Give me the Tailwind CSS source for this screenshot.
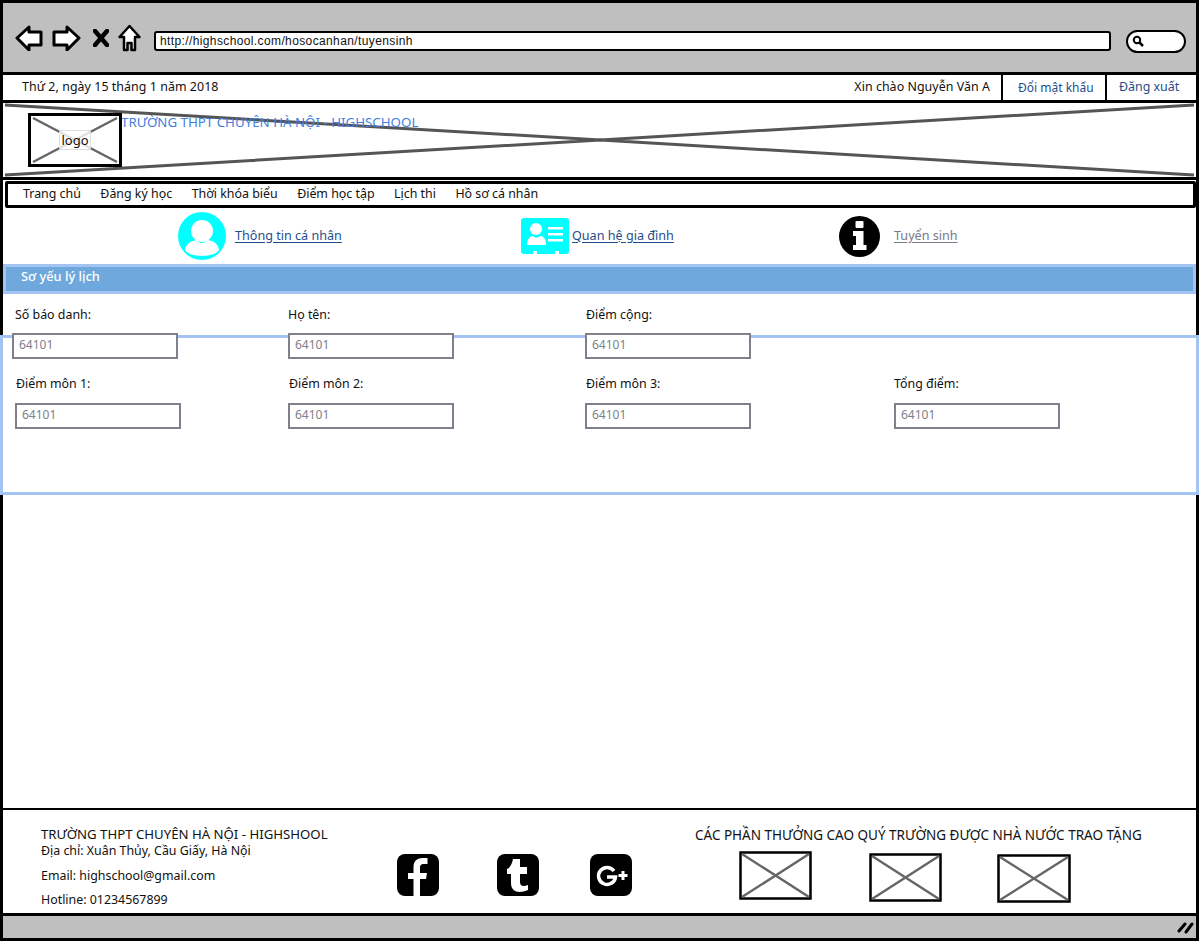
<!DOCTYPE html>
<html lang="vi">
<head>
  <meta charset="UTF-8" />
  <title>Tuyển sinh - Highschool</title>
  <script src="https://cdn.jsdelivr.net/npm/@tailwindcss/browser@4"></script>
</head>
<body class="bg-white font-['Noto_Sans',sans-serif] text-[12.4px] text-[#111]">
<div class="relative w-[1199px] h-[941px] border-[3px] border-black flex flex-col">

  <!-- browser toolbar -->
  <div class="h-[69px] shrink-0 bg-[#bfbfbf] flex items-center pl-[12px] pr-[10px]">
    <svg class="w-[28px] h-[26px] mr-[9px]" viewBox="0 0 28 26"><path d="M2 13 L14 2 L14 7 L26 7 L26 20 L14 20 L14 25 Z" fill="#fff" stroke="#000" stroke-width="3" stroke-linejoin="round"/></svg>
    <svg class="w-[29px] h-[26px] mr-[12px]" viewBox="0 0 29 26"><path d="M27 13 L15 2 L15 7 L2 7 L2 20 L15 20 L15 25 Z" fill="#fff" stroke="#000" stroke-width="3" stroke-linejoin="round"/></svg>
    <svg class="w-[16px] h-[18px] mr-[9px]" viewBox="0 0 16 18"><path d="M2 2 L14 16 M14 2 L2 16" stroke="#000" stroke-width="4.5" stroke-linecap="round"/></svg>
    <svg class="w-[23px] h-[28px] mr-[13px]" viewBox="0 0 23 28"><path d="M11.5 2 L21.5 13 L17 13 L17 26 L13.5 26 L13.5 19 L9.5 19 L9.5 26 L6 26 L6 13 L1.5 13 Z" fill="#fff" stroke="#000" stroke-width="2.5" stroke-linejoin="round"/></svg>
    <div class="w-[957px] h-[20px] mt-[7px] bg-white border-2 border-black rounded-[3px] flex items-center pl-[4px] font-['Liberation_Sans',sans-serif] text-[12px] tracking-[0.38px] mr-[15px]">http://highschool.com/hosocanhan/tuyensinh</div>
    <div class="w-[60px] h-[23px] mt-[7px] bg-white border-2 border-black rounded-full flex items-center pl-[4px]">
      <svg class="w-[12px] h-[12px]" viewBox="0 0 12 12"><circle cx="5" cy="5" r="3.2" fill="none" stroke="#000" stroke-width="2"/><path d="M7.5 7.5 L11 11" stroke="#000" stroke-width="2.5"/></svg>
    </div>
  </div>

  <!-- date / account bar -->
  <div class="h-[31px] shrink-0 border-y-[3px] border-black flex items-stretch">
    <div class="flex-1 flex items-center pl-[19px] tracking-[0.06px]">Thứ 2, ngày 15 tháng 1 năm 2018</div>
    <div class="flex items-center pr-[11px] tracking-[0.06px]">Xin chào Nguyễn Văn A</div>
    <a class="w-[104px] border-l-2 border-black flex items-center pl-[15px] text-[12px] text-[#1f4e8c]">Đổi mật khẩu</a>
    <a class="w-[91px] border-l-2 border-black flex items-center pl-[12px] text-[12.4px] text-[#1f4e8c]">Đăng xuất</a>
  </div>

  <!-- banner -->
  <div class="relative h-[77px] shrink-0 border-b-[3px] border-black">
    <svg class="absolute inset-0 w-full h-full" viewBox="0 0 1195 74" preserveAspectRatio="none"><path d="M2 2 L1193 72 M2 72 L1193 2" stroke="#555" stroke-width="3" fill="none"/></svg>
    <div class="relative flex items-start pl-[25px] pt-[10px]">
      <div class="relative w-[94px] h-[54px] bg-white border-[3px] border-black flex items-center justify-center">
        <svg class="absolute inset-0 w-full h-full" viewBox="0 0 88 48" preserveAspectRatio="none"><path d="M2 2 L86 46 M86 2 L2 46" stroke="#666" stroke-width="2.5" fill="none"/></svg>
        <span class="relative px-px py-[1px] bg-white/80 border border-[#ddd] rounded-[2px] text-[13px] leading-[16px]">logo</span>
      </div>
      <div class="text-[13.3px] text-[#3f7fe0] leading-[16px] -ml-px mt-px">TRƯỜNG THPT CHUYÊN HÀ NỘI - HIGHSCHOOL</div>
    </div>
  </div>

  <!-- main nav -->
  <nav class="h-[27px] shrink-0 mt-px ml-[2px] border-[3px] border-black rounded-[2px] flex items-center gap-[19.5px] pl-[15px]">
    <a>Trang chủ</a>
    <a>Đăng ký học</a>
    <a>Thời khóa biểu</a>
    <a>Điểm học tập</a>
    <a>Lịch thi</a>
    <a>Hồ sơ cá nhân</a>
  </nav>

  <!-- profile tabs -->
  <div class="h-[56px] shrink-0 grid grid-cols-[518px_318px_1fr] items-center text-[12.6px]">
    <div class="flex items-center pl-[175px] gap-[9px]">
      <svg class="w-[48px] h-[48px]" viewBox="0 0 48 48"><circle cx="24" cy="24" r="24" fill="#00ffff"/><circle cx="24" cy="19" r="11" fill="#fff"/><path d="M7 38 C8 31 14 29 18 28 C22 32 26 32 30 28 C35 29 40 31 41 38 C36 46 12 46 7 38 Z" fill="#fff"/></svg>
      <a class="text-[#1f4e8c] underline underline-offset-2">Thông tin cá nhân</a>
    </div>
    <div class="flex items-center gap-[3px]">
      <svg class="w-[48px] h-[37px]" viewBox="0 0 48 37"><path d="M3 0 H45 Q48 0 48 3 V33 Q48 36 45 36 H38 V33 H34 V36 H16 V33 H12 V36 H3 Q0 36 0 33 V3 Q0 0 3 0 Z" fill="#00ffff"/><circle cx="15" cy="11" r="6" fill="#fff"/><path d="M6 27 C6 20 10 18 12 18 C14 20 17 20 19 18 C22 18 25 20 25 27 Z" fill="#fff"/><path d="M27 9 H42 V11.5 H27 Z M27 15 H42 V17.5 H27 Z M27 21 H42 V23.5 H27 Z" fill="#fff"/></svg>
      <a class="text-[#1f4e8c] underline underline-offset-2">Quan hệ gia đình</a>
    </div>
    <div class="flex items-center gap-[14px]">
      <svg class="w-[41px] h-[41px]" viewBox="0 0 41 41"><circle cx="20.5" cy="20.5" r="20.5" fill="#000"/><rect x="16.5" y="5" width="8" height="7" rx="1" fill="#fff"/><path d="M14 15 H24.5 V29 H27.5 V34 H14 V29 H17 V20 H14 Z" fill="#fff"/></svg>
      <a class="text-[#7a7a88] underline underline-offset-2">Tuyển sinh</a>
    </div>
  </div>

  <!-- section heading -->
  <div class="h-[30px] shrink-0 bg-[#6fa8dc] border-[3px] border-[#a3c4f3] pl-[15px] text-[12.8px] text-white font-medium leading-[18px]">Sơ yếu lý lịch</div>

  <!-- form -->
  <div class="relative h-[200px] shrink-0 pl-[9px]">
    <div class="absolute left-[-3px] right-[-3px] top-[41px] h-[160px] border-[3px] border-[#a3c4f3]"></div>
    <div class="relative grid grid-cols-[276px_298px_308px_1fr] pt-[12px]">
      <label class="pl-[3px] h-[27px]">Số báo danh:</label>
      <label class="h-[27px]">Họ tên:</label>
      <label class="h-[27px]">Điểm cộng:</label>
      <div></div>
      <input value="64101" class="w-[166px] h-[26px] border-2 border-[#80808c] bg-white px-[5px] pb-[3px] text-[12px] text-[#80808c] outline-none" />
      <input value="64101" class="w-[166px] h-[26px] border-2 border-[#80808c] bg-white px-[5px] pb-[3px] text-[12px] text-[#80808c] outline-none" />
      <input value="64101" class="w-[166px] h-[26px] border-2 border-[#80808c] bg-white px-[5px] pb-[3px] text-[12px] text-[#80808c] outline-none -ml-px" />
      <div></div>
      <label class="pl-[4px] h-[28px] mt-[16px]">Điểm môn 1:</label>
      <label class="h-[28px] mt-[16px] pl-[1px]">Điểm môn 2:</label>
      <label class="h-[28px] mt-[16px]">Điểm môn 3:</label>
      <label class="h-[28px] mt-[16px]">Tổng điểm:</label>
      <input value="64101" class="w-[166px] h-[26px] border-2 border-[#80808c] bg-white px-[5px] pb-[3px] text-[12px] text-[#80808c] outline-none ml-[3px]" />
      <input value="64101" class="w-[166px] h-[26px] border-2 border-[#80808c] bg-white px-[5px] pb-[3px] text-[12px] text-[#80808c] outline-none" />
      <input value="64101" class="w-[166px] h-[26px] border-2 border-[#80808c] bg-white px-[5px] pb-[3px] text-[12px] text-[#80808c] outline-none -ml-px" />
      <input value="64101" class="w-[166px] h-[26px] border-2 border-[#80808c] bg-white px-[5px] pb-[3px] text-[12px] text-[#80808c] outline-none" />
    </div>
  </div>

  <div class="flex-1"></div>

  <!-- footer -->
  <footer class="h-[105px] shrink-0 border-t-2 border-black flex">
    <div class="w-[394px] pl-[38px] pt-[16px] leading-[16px]">
      <p class="text-[13.2px]">TRƯỜNG THPT CHUYÊN HÀ NỘI - HIGHSHOOL</p>
      <p class="mt-px">Địa chỉ: Xuân Thủy, Cầu Giấy, Hà Nội</p>
      <p class="mt-[9px]">Email: highschool@gmail.com</p>
      <p class="mt-[8px]">Hotline: 01234567899</p>
    </div>
    <div class="w-[298px] flex items-start pt-[44px]">
      <svg class="w-[42px] h-[42px] mr-[58px]" viewBox="0 0 42 42"><rect width="42" height="42" rx="8" fill="#000"/><path d="M23 42 V25 H29 L30 19 H23 V14 C23 11 24 10 27 10 H30.500 V4 H25.500 C19.500 4 16.500 7.500 16.500 13 V19 H11 V25 H16.500 V42 Z" fill="#fff"/></svg>
      <svg class="w-[42px] h-[42px] mr-[51px]" viewBox="0 0 42 42"><rect width="42" height="42" rx="8" fill="#000"/><path d="M16 5 H23 V13 H30 V20 H23 V28 C23 32 26 33 31 31 V36 C22 40 14 38 14 29 V20 H10 V15 C13 14 15 10 16 5 Z" fill="#fff"/></svg>
      <svg class="w-[42px] h-[42px]" viewBox="0 0 42 42"><rect width="42" height="42" rx="8" fill="#000"/><path d="M24 17 A8.500 8.500 0 1 0 25.500 23 H17" fill="none" stroke="#fff" stroke-width="3.500"/><path d="M33 17 V26 M28.500 21.500 H37.500" stroke="#fff" stroke-width="3"/></svg>
    </div>
    <div class="flex-1 pt-[17px]">
      <p class="leading-[16px] text-[13.5px]">CÁC PHẦN THƯỞNG CAO QUÝ TRƯỜNG ĐƯỢC NHÀ NƯỚC TRAO TẶNG</p>
      <div class="flex items-start pl-[44px] mt-[8px]">
        <svg class="w-[73px] h-[49px] mr-[57px]" viewBox="0 0 73 49"><rect x="1.500" y="1.500" width="70" height="46" fill="#fff" stroke="#000" stroke-width="2.500"/><path d="M3 3 L70 46 M70 3 L3 46" stroke="#666" stroke-width="2.500"/></svg>
        <svg class="w-[73px] h-[49px] mr-[55px] mt-[2px]" viewBox="0 0 73 49"><rect x="1.500" y="1.500" width="70" height="46" fill="#fff" stroke="#000" stroke-width="2.500"/><path d="M3 3 L70 46 M70 3 L3 46" stroke="#666" stroke-width="2.500"/></svg>
        <svg class="w-[74px] h-[49px] mt-[3px]" viewBox="0 0 74 49"><rect x="1.500" y="1.500" width="71" height="46" fill="#fff" stroke="#000" stroke-width="2.500"/><path d="M3 3 L71 46 M71 3 L3 46" stroke="#666" stroke-width="2.500"/></svg>
      </div>
    </div>
  </footer>

  <!-- status bar -->
  <div class="h-[25px] shrink-0 bg-[#bfbfbf] border-t-[3px] border-black flex items-center justify-end pr-[2px]">
    <svg class="w-[17px] h-[14px]" viewBox="0 0 17 14"><path d="M2 11 L8 4 M9 12 L15 4" stroke="#000" stroke-width="3" stroke-linecap="round"/></svg>
  </div>
</div>
</body>
</html>
